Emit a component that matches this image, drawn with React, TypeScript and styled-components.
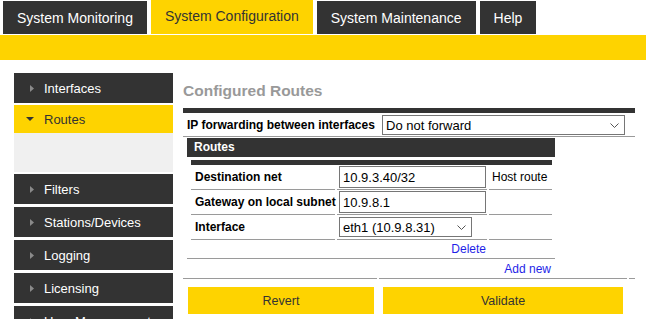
import React from 'react'
import styled, { createGlobalStyle } from 'styled-components'

const GlobalStyle = createGlobalStyle`
  html, body {
    margin: 0;
    padding: 0;
    background: #ffffff;
    font-family: "Liberation Sans", Arial, sans-serif;
  }
`;

const YELLOW = '#fed300';
const DARK = '#333333';
const LINE = '#9a9a9a';

const Page = styled.div`
  width: 646px;
  height: 319px;
  overflow: hidden;
`;

const TabBar = styled.div`
  display: flex;
  align-items: flex-end;
  gap: 4px;
  height: 34px;
  padding-left: 3px;
  margin-bottom: 1px;
`;

const Tab = styled.div<{ $active?: boolean }>`
  height: ${p => (p.$active ? 34 : 33)}px;
  line-height: ${p => (p.$active ? 33 : 34)}px;
  padding: 0 14px;
  font-size: 14px;
  background: ${p => (p.$active ? YELLOW : DARK)};
  color: ${p => (p.$active ? DARK : '#ffffff')};
  white-space: nowrap;
`;

const YellowBand = styled.div`
  height: 25px;
  background: ${YELLOW};
`;

const Body = styled.div`
  display: flex;
  align-items: flex-start;
  gap: 10px;
  padding: 13px 0 0 14px;
`;

const Sidebar = styled.div`
  width: 159px;
  flex-shrink: 0;
  display: flex;
  flex-direction: column;
`;

const SideItem = styled.div<{ $active?: boolean; $h?: number; $mb?: number }>`
  display: flex;
  align-items: center;
  height: ${p => p.$h ?? 30}px;
  margin-bottom: ${p => p.$mb ?? 3}px;
  padding-left: 12px;
  background: ${p => (p.$active ? YELLOW : DARK)};
  color: ${p => (p.$active ? DARK : '#ffffff')};
  font-size: 13px;
  line-height: 15px;
  white-space: nowrap;
`;

const Arrow = styled.span`
  display: flex;
  justify-content: flex-end;
  align-items: center;
  width: 8px;
  margin-right: 10px;
`;

const SubPanel = styled.div`
  height: 39px;
  margin-bottom: 2px;
  background: #f0f0f0;
`;

const Main = styled.div`
  width: 452px;
  flex-shrink: 0;
`;

const Title = styled.h2`
  margin: 0;
  padding: 9px 0 8px;
  font-size: 15.5px;
  line-height: 18px;
  font-weight: bold;
  color: #999999;
`;

const HeavyRule = styled.div<{ $inset?: boolean }>`
  height: 5px;
  background: ${DARK};
  margin: ${p => (p.$inset ? '3px 3px 0 4px' : '0')};
`;

const OuterGrid = styled.div`
  display: grid;
  grid-template-columns: 194px 248px 1fr;
  column-gap: 2px;
`;

const IpRow = styled(OuterGrid)`
  height: 22px;
  padding-top: 1px;
  align-items: center;
  border-bottom: 1px solid ${LINE};
`;

const Label = styled.div`
  padding-left: 4px;
  font-size: 12px;
  font-weight: bold;
  color: #000000;
  white-space: nowrap;
`;

const SelectWrap = styled.div<{ $w: number; $ml?: number }>`
  position: relative;
  width: ${p => p.$w}px;
  height: 20px;
  margin-left: ${p => p.$ml ?? 0}px;
`;

const Select = styled.select`
  appearance: none;
  width: 100%;
  height: 100%;
  box-sizing: border-box;
  border: 1px solid #767676;
  border-radius: 0;
  background: #ffffff;
  padding: 0 0 0 3px;
  font-family: "Liberation Sans", Arial, sans-serif;
  font-size: 13px;
  color: #000000;
  outline: none;
`;

const Chevron = styled.svg`
  position: absolute;
  right: 6px;
  top: 8px;
  pointer-events: none;
`;

const RoutesBlock = styled.div`
  margin: 1px 0 0 4px;
  width: 368px;
`;

const RoutesHeader = styled.div`
  height: 19px;
  line-height: 19px;
  padding-left: 7px;
  background: ${DARK};
  color: #ffffff;
  font-size: 12px;
  font-weight: bold;
`;

const FieldGrid = styled.div`
  display: grid;
  grid-template-columns: 144px 150px 1fr;
  column-gap: 2px;
  margin: 0 3px 0 4px;
`;

const Cell = styled.div`
  display: flex;
  align-items: center;
  height: 24px;
  border-bottom: 1px solid ${LINE};
  font-size: 12px;
  color: #000000;
  white-space: nowrap;
`;

const Input = styled.input`
  width: 147px;
  height: 22px;
  box-sizing: border-box;
  margin-left: 2px;
  border: 1px solid #767676;
  padding: 0 3px;
  font-family: "Liberation Sans", Arial, sans-serif;
  font-size: 13px;
  color: #000000;
  outline: none;
`;

const NoteCell = styled(Cell)`
  padding-left: 3px;
`;

const DeleteRow = styled.div`
  height: 18px;
  border-bottom: 1px solid ${LINE};
`;

const DeleteSlot = styled.div`
  grid-column: 2;
  text-align: right;
  padding: 1px 1px 0 0;
  line-height: 14px;
`;

const AddRow = styled.div`
  height: 19px;
  padding-right: 4px;
  text-align: right;
  line-height: 18px;
`;

const Link = styled.a`
  font-size: 12px;
  color: #1f1fe8;
  text-decoration: none;
  cursor: pointer;
`;

const ButtonCell = styled.div<{ $pl: number; $pr: number }>`
  border-top: 1px solid ${LINE};
  padding: 8px ${p => p.$pr}px 0 ${p => p.$pl}px;
`;

const Button = styled.button`
  display: block;
  width: 100%;
  height: 27px;
  border: none;
  background: ${YELLOW};
  color: ${DARK};
  font-family: "Liberation Sans", Arial, sans-serif;
  font-size: 12.5px;
  cursor: pointer;
`;

const RightTri = () => (
  <svg width="4" height="7" viewBox="0 0 4 7">
    <polygon points="0,0 4,3.5 0,7" fill="#8a8a8a" />
  </svg>
);

const DownTri = () => (
  <svg width="8" height="4" viewBox="0 0 8 4">
    <polygon points="0,0 8,0 4,4" fill={DARK} />
  </svg>
);

const ChevronIcon = () => (
  <Chevron width="9" height="5" viewBox="0 0 9 5">
    <polyline points="0.5,0.5 4.5,4.5 8.5,0.5" fill="none" stroke="#555" strokeWidth="1" />
  </Chevron>
);

const tabs = ['System Monitoring', 'System Configuration', 'System Maintenance', 'Help'];
const lowerMenu = ['Filters', 'Stations/Devices', 'Logging', 'Licensing', 'User Management'];

const App = () => {
  return (
    <Page>
      <GlobalStyle />
      <TabBar>
        {tabs.map(t => (
          <Tab key={t} $active={t === 'System Configuration'}>{t}</Tab>
        ))}
      </TabBar>
      <YellowBand />
      <Body>
        <Sidebar>
          <SideItem $mb={2}>
            <Arrow><RightTri /></Arrow>Interfaces
          </SideItem>
          <SideItem $active $h={28} $mb={0}>
            <Arrow><DownTri /></Arrow>Routes
          </SideItem>
          <SubPanel />
          {lowerMenu.map(m => (
            <SideItem key={m}>
              <Arrow><RightTri /></Arrow>{m}
            </SideItem>
          ))}
        </Sidebar>

        <Main>
          <Title>Configured Routes</Title>
          <HeavyRule />
          <IpRow>
            <Label>IP forwarding between interfaces</Label>
            <SelectWrap $w={243} $ml={3}>
              <Select defaultValue="none">
                <option value="none">Do not forward</option>
                <option value="all">Forward</option>
              </Select>
              <ChevronIcon />
            </SelectWrap>
            <div />
          </IpRow>

          <RoutesBlock>
            <RoutesHeader>Routes</RoutesHeader>
            <HeavyRule $inset />
            <FieldGrid>
              <Cell><Label>Destination net</Label></Cell>
              <Cell><Input defaultValue="10.9.3.40/32" /></Cell>
              <NoteCell>Host route</NoteCell>

              <Cell><Label>Gateway on local subnet</Label></Cell>
              <Cell><Input defaultValue="10.9.8.1" /></Cell>
              <NoteCell />

              <Cell><Label>Interface</Label></Cell>
              <Cell>
                <SelectWrap $w={133} $ml={2}>
                  <Select defaultValue="eth1">
                    <option value="eth1">eth1 (10.9.8.31)</option>
                  </Select>
                  <ChevronIcon />
                </SelectWrap>
              </Cell>
              <NoteCell />
            </FieldGrid>
            <DeleteRow>
              <FieldGrid>
                <DeleteSlot><Link>Delete</Link></DeleteSlot>
              </FieldGrid>
            </DeleteRow>
            <AddRow><Link>Add new</Link></AddRow>
          </RoutesBlock>

          <OuterGrid>
            <ButtonCell $pl={5} $pr={3}><Button>Revert</Button></ButtonCell>
            <ButtonCell $pl={4} $pr={4}><Button>Validate</Button></ButtonCell>
            <ButtonCell $pl={0} $pr={0} />
          </OuterGrid>
        </Main>
      </Body>
    </Page>
  );
};

export default App;
